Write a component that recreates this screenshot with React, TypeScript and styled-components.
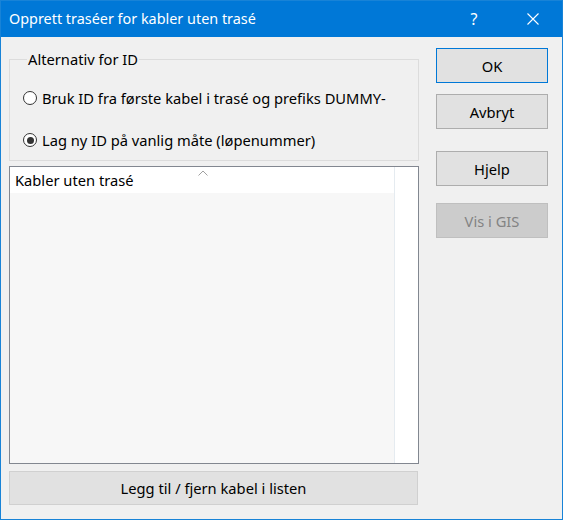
import styled, { createGlobalStyle } from 'styled-components';

const GlobalStyle = createGlobalStyle`
  html, body {
    margin: 0;
    padding: 0;
    background: #ffffff;
  }
  * {
    box-sizing: border-box;
  }
`;

const Window = styled.div`
  width: 563px;
  height: 520px;
  display: flex;
  flex-direction: column;
  border: 1px solid #1883d7;
  background: #f0f0f0;
  font-family: 'Noto Sans', 'Open Sans', sans-serif;
  font-size: 14.7px;
  color: #000000;
`;

const TitleBar = styled.div`
  height: 36px;
  display: flex;
  align-items: center;
  background: #0078d7;
  color: #ffffff;
  padding-left: 8px;
`;

const Title = styled.div`
  flex: 1;
  font-size: 14.4px;
  padding-bottom: 1px;
`;

const TitleButton = styled.div<{ $width: number }>`
  width: ${({ $width }) => $width}px;
  height: 36px;
  display: flex;
  align-items: center;
  justify-content: center;
  font-size: 16px;
`;

const Body = styled.div`
  flex: 1;
  display: flex;
  gap: 17px;
  padding: 12px 13px 16px 8px;
`;

const LeftColumn = styled.div`
  width: 410px;
  display: flex;
  flex-direction: column;
`;

const GroupBox = styled.fieldset`
  margin: 0;
  padding: 19px 0 10px 13px;
  border: 1px solid #dcdcdc;
  display: flex;
  flex-direction: column;
  gap: 22px;
`;

const Legend = styled.legend`
  padding: 0 1px;
  margin-left: 4px;
  line-height: 20px;
`;

const RadioRow = styled.label`
  display: flex;
  align-items: center;
  gap: 5px;
  height: 20px;
`;

const RadioCircle = styled.span<{ $checked?: boolean }>`
  flex: none;
  width: 14px;
  height: 14px;
  border-radius: 50%;
  border: 1.5px solid #333333;
  background: #ffffff;
  display: flex;
  align-items: center;
  justify-content: center;

  &::after {
    content: '';
    width: 7px;
    height: 7px;
    border-radius: 50%;
    background: ${({ $checked }) => ($checked ? '#333333' : 'transparent')};
  }
`;

const ListBox = styled.div`
  margin-top: 5px;
  height: 298px;
  display: flex;
  border: 1px solid #828790;
  background: #ffffff;
`;

const ListMain = styled.div`
  width: 385px;
  display: flex;
  flex-direction: column;
  border-right: 1px solid #e5ebf0;
`;

const ListHeader = styled.div`
  position: relative;
  height: 26px;
  display: flex;
  align-items: flex-end;
  padding: 0 0 3px 5px;
  background: #ffffff;
`;

const SortCaret = styled.svg`
  position: absolute;
  top: 3px;
  left: 188px;
`;

const ListRows = styled.div`
  flex: 1;
  background: #f7f7f7;
`;

const WideButton = styled.button`
  margin-top: 7px;
  height: 34px;
  width: 409px;
  border: 1px solid #d0d0d0;
  background: #e1e1e1;
  font: inherit;
  color: #000000;
`;

const RightColumn = styled.div`
  display: flex;
  flex-direction: column;
`;

const DialogButton = styled.button<{ $gap: number; $primary?: boolean }>`
  margin-top: ${({ $gap }) => $gap}px;
  width: 112px;
  height: 35px;
  font: inherit;
  background: ${({ disabled }) => (disabled ? '#cccccc' : '#e1e1e1')};
  color: ${({ disabled }) => (disabled ? '#838383' : '#000000')};
  border: 1px solid
    ${({ $primary, disabled }) => ($primary ? '#0078d7' : disabled ? '#bfbfbf' : '#adadad')};
`;

export default function App() {
  return (
    <>
      <GlobalStyle />
      <Window>
        <TitleBar>
          <Title>Opprett traséer for kabler uten trasé</Title>
          <TitleButton $width={60}>?</TitleButton>
          <TitleButton $width={58}>
            <svg width="12" height="12" viewBox="0 0 12 12">
              <path d="M0.5 0.5 L11.5 11.5 M11.5 0.5 L0.5 11.5" stroke="#ffffff" strokeWidth="1.1" />
            </svg>
          </TitleButton>
        </TitleBar>
        <Body>
          <LeftColumn>
            <GroupBox>
              <Legend>Alternativ for ID</Legend>
              <RadioRow>
                <RadioCircle />
                Bruk ID fra første kabel i trasé og prefiks DUMMY-
              </RadioRow>
              <RadioRow>
                <RadioCircle $checked />
                Lag ny ID på vanlig måte (løpenummer)
              </RadioRow>
            </GroupBox>
            <ListBox>
              <ListMain>
                <ListHeader>
                  Kabler uten trasé
                  <SortCaret width="10" height="6" viewBox="0 0 10 6">
                    <path d="M0.5 5.5 L5 1 L9.5 5.5" fill="none" stroke="#a0a0a0" strokeWidth="1" />
                  </SortCaret>
                </ListHeader>
                <ListRows />
              </ListMain>
            </ListBox>
            <WideButton>Legg til / fjern kabel i listen</WideButton>
          </LeftColumn>
          <RightColumn>
            <DialogButton $gap={-1} $primary>OK</DialogButton>
            <DialogButton $gap={11}>Avbryt</DialogButton>
            <DialogButton $gap={22}>Hjelp</DialogButton>
            <DialogButton $gap={17} disabled>Vis i GIS</DialogButton>
          </RightColumn>
        </Body>
      </Window>
    </>
  );
}
